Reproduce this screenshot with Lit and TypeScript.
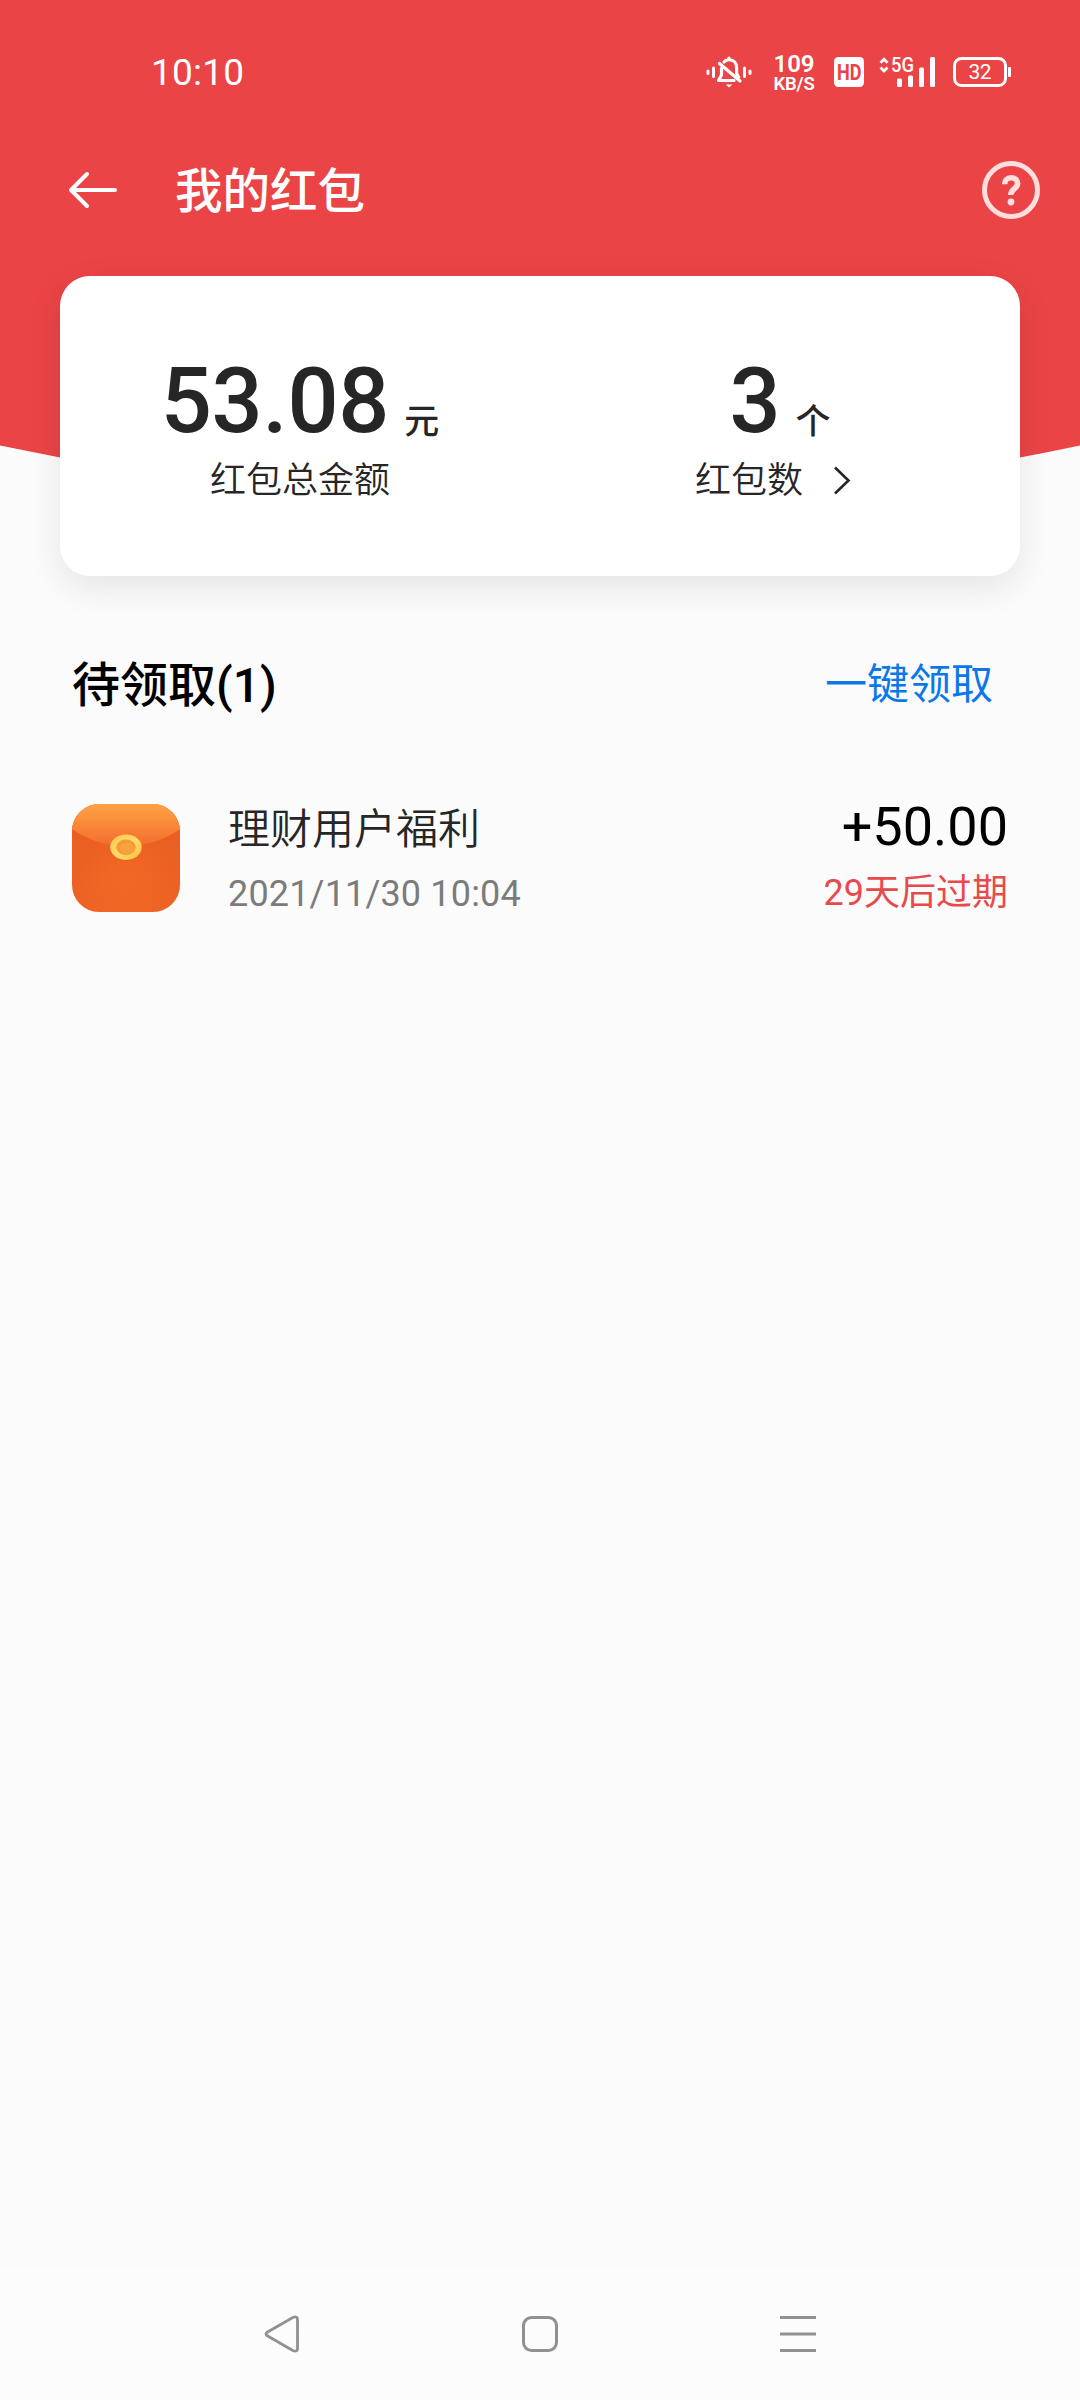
import { LitElement, html, css, svg } from "lit";
import { customElement, property } from "lit/decorators.js";

const fontStack = css`Roboto, "Noto Sans CJK SC", sans-serif`;

@customElement("status-bar")
class StatusBar extends LitElement {
  static styles = css`
    :host {
      display: flex;
      align-items: center;
      justify-content: space-between;
      height: 144px;
      padding: 0 69px 0 151px;
      box-sizing: border-box;
      color: #fff;
      font-family: ${fontStack};
    }
    svg {
      display: block;
      overflow: visible;
    }
    .time {
      padding-top: 1px;
      font-size: 37px;
      line-height: 44px;
      letter-spacing: 0.2px;
    }
    .icons {
      display: flex;
      align-items: center;
    }
    .speed {
      width: 42px;
      margin-left: 21px;
      padding-top: 3px;
      display: flex;
      flex-direction: column;
      align-items: center;
      font-weight: 600;
      white-space: nowrap;
    }
    .rate {
      font-size: 24px;
      line-height: 20px;
    }
    .unit {
      font-size: 18.5px;
      line-height: 20px;
      letter-spacing: -0.2px;
    }
    .hd {
      margin-left: 19px;
    }
    .signal {
      margin-left: 15px;
    }
    .battery {
      margin-left: 18px;
    }
  `;

  render() {
    return html`
      <span class="time">10:10</span>
      <div class="icons">
        <svg width="46" height="34" viewBox="0 0 46 34" fill="none" stroke="#fff" stroke-width="3" stroke-linecap="round">
          <path d="M2 16v2.500M7.500 13v8.500M38.500 13v8.500M44 16v2.500" />
          <path d="M15.500 13V20l-3 5.500H28M18 7c1.500-1.800 3.200-2.400 5-2.400 4.500 0 7.600 3.300 7.600 8V18.500l2 3.500M23 4V3M13.500 8.500L34 26" stroke-linejoin="round" stroke-width="3.200" />
          <path d="M19.800 29.500h6.400l-3.200 3z" fill="#fff" stroke="none" />
        </svg>
        <div class="speed">
          <span class="rate">109</span>
          <span class="unit">KB/S</span>
        </div>
        <svg class="hd" width="30" height="30" viewBox="0 0 30 30">
          <rect width="30" height="30" rx="4.500" fill="#fff" />
          <text x="3" y="22.800" font-size="22" font-weight="700" fill="#ea4446" textLength="24.500" lengthAdjust="spacingAndGlyphs">HD</text>
        </svg>
        <svg class="signal" width="56" height="30" viewBox="0 0 56 30">
          <path d="M1.500 5.800L5 2.300l3.500 3.500M1.500 10.500L5 14l3.500-3.500" fill="none" stroke="#fff" stroke-width="2.800" />
          <text x="12" y="15" font-size="19.500" font-weight="500" fill="#fff" textLength="23" lengthAdjust="spacingAndGlyphs">5G</text>
          <g fill="#fff">
            <rect x="18" y="21.500" width="5" height="8.500" rx="1.500" />
            <rect x="29" y="18.500" width="5" height="11.500" rx="1.500" />
            <rect x="40" y="10.500" width="5" height="19.500" rx="1.500" />
            <rect x="51" y="0" width="5" height="30" rx="1.500" />
          </g>
        </svg>
        <svg class="battery" width="58" height="30" viewBox="0 0 58 30">
          <rect x="1.500" y="1.500" width="51" height="27" rx="7" fill="none" stroke="#fff" stroke-width="3" />
          <rect x="55" y="10" width="3" height="10" rx="1" fill="#fff" />
          <text x="15.500" y="22" font-size="21" fill="#fff" textLength="23">32</text>
        </svg>
      </div>
    `;
  }
}

@customElement("title-bar")
class TitleBar extends LitElement {
  @property() heading = "";

  static styles = css`
    :host {
      display: flex;
      align-items: center;
      height: 92px;
      padding: 0 40px 0 66px;
      box-sizing: border-box;
      color: #fff;
      font-family: ${fontStack};
    }
    svg {
      display: block;
    }
    .heading {
      flex: 1;
      margin: 0 0 0 55px;
      padding-top: 3px;
      font-size: 47.5px;
      line-height: 60px;
      font-weight: 500;
    }
  `;

  render() {
    return html`
      <svg width="54" height="40" viewBox="0 0 54 40" fill="none" stroke="#fff" stroke-width="4" stroke-linecap="round" stroke-linejoin="round">
        <path d="M49 20H5M21 4L5 20l16 16" />
      </svg>
      <h1 class="heading">${this.heading}</h1>
      <svg width="58" height="58" viewBox="0 0 58 58" fill="none" stroke="#ffdedd">
        <circle cx="29" cy="29" r="26.500" stroke-width="5" />
        <path d="M22.600 23.200c0-4 2.700-6.500 6.600-6.500 3.700 0 6.400 2.400 6.400 5.900 0 5-6.800 5.300-6.800 11.400" stroke-width="5.600" />
        <circle cx="29" cy="41" r="3.400" fill="#ffdedd" stroke="none" />
      </svg>
    `;
  }
}

@customElement("summary-card")
class SummaryCard extends LitElement {
  static styles = css`
    :host {
      display: flex;
      height: 300px;
      margin: 40px 60px 0;
      padding-top: 81px;
      box-sizing: border-box;
      border-radius: 30px;
      background: #fff;
      box-shadow: 0 12px 36px rgba(0, 0, 0, 0.09);
      color: #262626;
      font-family: ${fontStack};
    }
    .stat {
      flex: 1;
      display: flex;
      flex-direction: column;
      align-items: center;
    }
    .value {
      display: flex;
      align-items: baseline;
      gap: 15px;
      height: 90px;
      margin-bottom: 7px;
      font-size: 90px;
      line-height: 90px;
      font-weight: 500;
    }
    .amount {
      letter-spacing: -0.2px;
    }
    .unit {
      padding-top: 2px;
      font-size: 35px;
      line-height: 40px;
      transform: translateY(1.5px);
    }
    .label {
      display: flex;
      align-items: center;
      font-size: 36px;
      line-height: 54px;
      font-weight: 350;
    }
  `;

  render() {
    return html`
      <div class="stat">
        <div class="value"><span class="amount">53.08</span><span class="unit">元</span></div>
        <div class="label">红包总金额</div>
      </div>
      <div class="stat">
        <div class="value"><span class="amount">3</span><span class="unit">个</span></div>
        <div class="label">
          红包数
          <svg width="62" height="30" viewBox="0 0 62 30" fill="none" stroke="#262626" stroke-width="2.600">
            <path d="M32 1.500L45.500 14.500 32 27.500" />
          </svg>
        </div>
      </div>
    `;
  }
}

interface Packet {
  name: string;
  time: string;
  amount: string;
  expiry: string;
}

const envelope = svg`
  <defs>
    <linearGradient id="body" x1="0" y1="0" x2="0" y2="1">
      <stop offset="0.200" stop-color="#e95e22" />
      <stop offset="1" stop-color="#ee6323" />
    </linearGradient>
    <radialGradient id="glow" cx="0.500" cy="0.700" r="0.500">
      <stop offset="0" stop-color="#f26824" />
      <stop offset="1" stop-color="#f26824" stop-opacity="0" />
    </radialGradient>
    <linearGradient id="flap" x1="0" y1="0" x2="0" y2="1">
      <stop offset="0" stop-color="#ffa246" />
      <stop offset="0.500" stop-color="#fa8838" />
      <stop offset="1" stop-color="#f26d2d" />
    </linearGradient>
    <linearGradient id="ring" x1="0" y1="0" x2="1" y2="1">
      <stop offset="0" stop-color="#fbc850" />
      <stop offset="0.500" stop-color="#ffd966" />
      <stop offset="1" stop-color="#fbbd45" />
    </linearGradient>
    <clipPath id="frame"><rect width="108" height="108" rx="27" /></clipPath>
  </defs>
  <g clip-path="url(#frame)">
    <rect width="108" height="108" fill="url(#body)" />
    <rect width="108" height="108" fill="url(#glow)" />
    <path d="M0 0h108v25Q84 42 54 42T0 25z" fill="url(#flap)" />
  </g>
  <ellipse cx="54" cy="44.500" rx="16" ry="12.500" fill="#d9541f" opacity="0.350" />
  <ellipse cx="54" cy="43.300" rx="15.800" ry="12.700" fill="url(#ring)" />
  <ellipse cx="54" cy="43.300" rx="9.800" ry="7.800" fill="#f5993a" />
  <ellipse cx="55" cy="44.500" rx="7" ry="5.500" fill="#f8a23e" />
`;

@customElement("packet-row")
class PacketRow extends LitElement {
  @property({ attribute: false }) packet!: Packet;

  static styles = css`
    :host {
      display: flex;
      align-items: center;
      height: 156px;
      padding: 0 72px;
      font-family: ${fontStack};
    }
    .details {
      flex: 1;
      margin-left: 48px;
      padding-top: 8px;
    }
    .status {
      padding-top: 6px;
      text-align: right;
    }
    .name {
      font-size: 42px;
      line-height: 64px;
      font-weight: 350;
      color: #262626;
    }
    .time {
      font-size: 36px;
      line-height: 64px;
      letter-spacing: 0.17px;
      color: #7b7b7b;
    }
    .amount {
      font-size: 54px;
      line-height: 60px;
      color: #000;
    }
    .expiry {
      padding-top: 4px;
      font-size: 36px;
      line-height: 64px;
      color: #e84a4c;
    }
  `;

  render() {
    const { name, time, amount, expiry } = this.packet;
    return html`
      <svg width="108" height="108" viewBox="0 0 108 108">${envelope}</svg>
      <div class="details">
        <div class="name">${name}</div>
        <div class="time">${time}</div>
      </div>
      <div class="status">
        <div class="amount">${amount}</div>
        <div class="expiry">${expiry}</div>
      </div>
    `;
  }
}

@customElement("nav-bar")
class NavBar extends LitElement {
  static styles = css`
    :host {
      display: flex;
      align-items: center;
      justify-content: space-between;
      height: 132px;
      padding: 0 262px;
      box-sizing: border-box;
      background: #fcfcfc;
    }
  `;

  render() {
    return html`
      <svg width="40" height="40" viewBox="0 0 40 40" fill="none" stroke="#919191" stroke-width="2.800" stroke-linejoin="round">
        <path d="M5.200 18.200L31.300 3.300Q35.500 1.800 35.500 5.800V34.200Q35.500 38.200 31.300 36.700L5.200 21.800Q2.800 20 5.200 18.200z" />
      </svg>
      <svg width="40" height="40" viewBox="0 0 40 40" fill="none" stroke="#919191" stroke-width="3">
        <rect x="3.500" y="3.500" width="33" height="33" rx="8" />
      </svg>
      <svg width="40" height="40" viewBox="0 0 40 40" stroke="#919191" stroke-width="3">
        <path d="M2 3.500h36M2 20h36M2 36.500h36" />
      </svg>
    `;
  }
}

@customElement("app-root")
class AppRoot extends LitElement {
  private packets: Packet[] = [
    { name: "理财用户福利", time: "2021/11/30 10:04", amount: "+50.00", expiry: "29天后过期" },
  ];

  static styles = css`
    :host {
      display: block;
      font-family: ${fontStack};
    }
    .screen {
      display: grid;
      grid-template-columns: 1080px;
      grid-template-rows: 576px 1fr auto;
      width: 1080px;
      height: 2400px;
      background: #fbfbfb;
    }
    .backdrop {
      grid-area: 1 / 1;
      display: block;
    }
    .top {
      grid-area: 1 / 1;
    }
    .content {
      padding-top: 72px;
    }
    .section {
      display: flex;
      align-items: center;
      justify-content: space-between;
      height: 76px;
      margin-bottom: 56px;
      padding: 0 87px 0 72px;
    }
    .count {
      margin: 0;
      font-size: 48px;
      line-height: 72px;
      font-weight: 500;
      color: #000;
    }
    .claim {
      padding-bottom: 3px;
      font-size: 42px;
      line-height: 72px;
      color: #0a78e8;
    }
  `;

  render() {
    return html`
      <div class="screen">
        <svg class="backdrop" width="1080" height="576" viewBox="0 0 1080 576">
          <path d="M0 0h1080v445.500Q540 560 0 445.500z" fill="#ea4446" />
        </svg>
        <div class="top">
          <status-bar></status-bar>
          <title-bar heading="我的红包"></title-bar>
          <summary-card></summary-card>
        </div>
        <main class="content">
          <div class="section">
            <h2 class="count">待领取(${this.packets.length})</h2>
            <span class="claim">一键领取</span>
          </div>
          ${this.packets.map((p) => html`<packet-row .packet=${p}></packet-row>`)}
        </main>
        <nav-bar></nav-bar>
      </div>
    `;
  }
}
